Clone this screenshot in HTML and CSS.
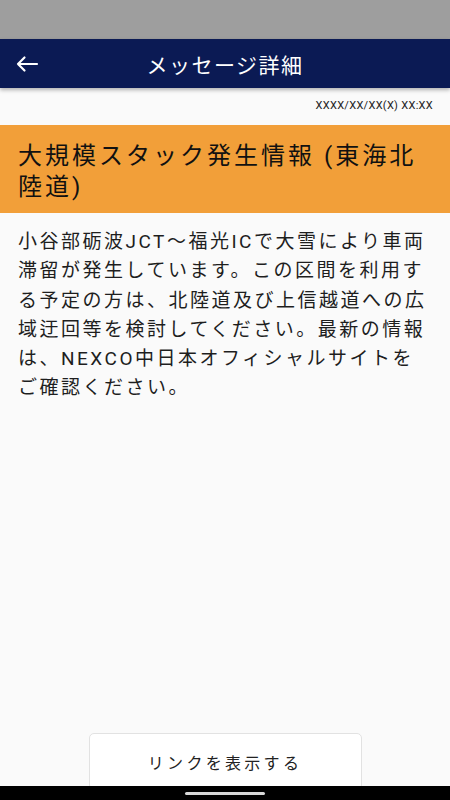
FILE: index.html
```html
<!DOCTYPE html>
<html lang="ja">
<head>
    <meta charset="UTF-8">
    <meta name="viewport" content="width=device-width, initial-scale=1.0">
    <title>メッセージ詳細</title>
    <link rel="stylesheet" href="styles.css">
</head>
<body>
    <div class="statusbar"></div>
    <div class="header">
        <svg class="back" width="24" height="24" viewBox="0 0 24 24">
            <path d="M2 12H21M2 12L8.5 5.5M2 12L8.5 18.5" fill="none" stroke="#fff" stroke-width="2.2" stroke-linecap="round"/>
        </svg>
        <h1>メッセージ詳細</h1>
    </div>
    <div class="main">
        <div class="date">XXXX/XX/XX(X) XX:XX</div>
        <div class="subject">大規模スタック発生情報 (東海北陸道)</div>
        <p class="body">小谷部砺波JCT〜福光ICで大雪により車両滞留が発生しています。この区間を利用する予定の方は、北陸道及び上信越道への広域迂回等を検討してください。最新の情報は、NEXCO中日本オフィシャルサイトをご確認ください。</p>
    </div>
    <div class="footer">
        <button class="link">リンクを表示する</button>
    </div>
    <div class="navbar"><span></span></div>
</body>
</html>
```

FILE: styles.css
```css
body{
    margin: 0;
    padding: 0;
    height: 800px;
    overflow: hidden;
    display: flex;
    flex-direction: column;
    background-color: #fafafa;
    font-family: Roboto, "Noto Sans CJK JP", sans-serif;
    color: #1e1e1e;
}
.statusbar{
    height: 39px;
    background-color: #9e9e9e;
}
.header{
    height: 49px;
    display: flex;
    align-items: center;
    background-color: #0b1a54;
    box-shadow: 0 2px 4px rgba(0, 0, 0, 0.3);
    z-index: 1;
}
.back{
    margin-left: 16px;
    width: 24px;
    flex-shrink: 0;
}
.header h1{
    flex: 1;
    margin: 0 40px 0 0;
    text-align: center;
    font-size: 21px;
    font-weight: normal;
    letter-spacing: 1.5px;
    color: #fff;
}
.main{
    flex: 1;
}
.date{
    height: 37px;
    line-height: 35px;
    padding-right: 17px;
    text-align: right;
    font-size: 11px;
    letter-spacing: 0.3px;
    color: #222;
}
.subject{
    padding: 16px 18px 11px;
    background-color: #f29f39;
    font-size: 24px;
    line-height: 30.5px;
    letter-spacing: 3px;
    color: #111;
}
.body{
    margin: 0;
    padding: 14px 22px 0 18px;
    font-size: 19px;
    line-height: 29.3px;
    letter-spacing: 2.5px;
}
.footer{
    display: flex;
    justify-content: center;
    padding-bottom: 10px;
}
.link{
    width: 273px;
    height: 57px;
    background-color: #fff;
    border: 1px solid #e2e2e2;
    border-radius: 5px;
    font-family: Roboto, "Noto Sans CJK JP", sans-serif;
    font-size: 16px;
    letter-spacing: 3.3px;
    color: #222;
    padding: 0;
}
.navbar{
    position: fixed;
    left: 0;
    right: 0;
    bottom: 0;
    height: 14px;
    background-color: #000;
    display: flex;
    justify-content: center;
    align-items: center;
}
.navbar span{
    width: 80px;
    height: 3px;
    border-radius: 2px;
    background-color: #d8d8d8;
}
```
